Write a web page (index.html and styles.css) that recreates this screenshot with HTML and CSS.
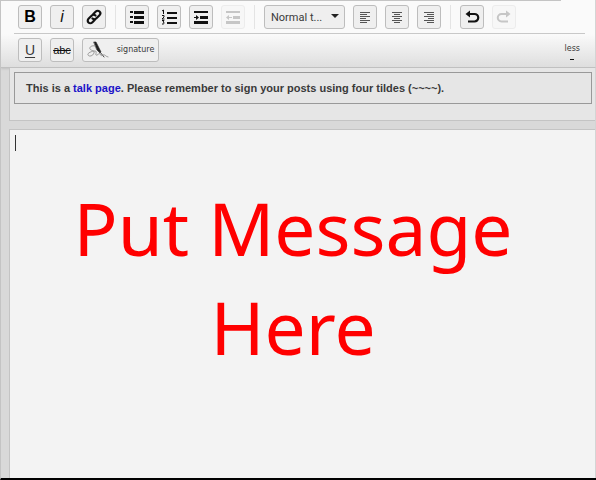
FILE: index.html
```
<!DOCTYPE html>
<html lang="en">
<head>
  <meta charset="UTF-8" />
  <meta name="viewport" content="width=device-width, initial-scale=1.0"/>
  <title>Message Editor</title>
  <link rel="stylesheet" href="styles.css">
</head>
<body>
<header class="toolbar">
  <div class="row">
    <div class="group">
      <button class="tool bold" type="button" aria-label="Bold">B</button>
      <button class="tool italic" type="button" aria-label="Italic">i</button>
      <button class="tool" type="button" aria-label="Link">
        <svg width="16" height="16" viewBox="0 0 16 16" fill="none" stroke="#111" stroke-width="2.200" stroke-linecap="round">
          <path d="M6.500 9.500a2.600 2.600 0 0 0 3.700 0l3.300-3.300a2.600 2.600 0 0 0-3.700-3.700L7.300 5"/>
          <path d="M9.500 6.500a2.600 2.600 0 0 0-3.700 0L2.500 9.800a2.600 2.600 0 0 0 3.700 3.700L8.700 11"/>
        </svg>
      </button>
    </div>
    <div class="group">
      <button class="tool" type="button" aria-label="Bulleted list">
        <svg width="16" height="16" viewBox="0 0 16 16" fill="#111">
          <path d="M1 2h3v2H1zM1 7h3v2H1zM1 12h3v2H1zM5 2h10v3H5zM5 7h10v3H5zM5 12h10v3H5z"/>
        </svg>
      </button>
      <button class="tool" type="button" aria-label="Numbered list">
        <svg width="16" height="16" viewBox="0 0 16 16" fill="#111">
          <path d="M6 3h10v2H6zM6 8h10v2H6zM6 13h10v2H6z"/>
          <path d="M1 2l1.500-1v4M1 6.500h2V8L1 10h2.500M1 11.500h2L2 13q1.500 0 1 1.500-.500.800-2 .500" fill="none" stroke="#111"/>
        </svg>
      </button>
      <button class="tool" type="button" aria-label="Indent">
        <svg width="16" height="16" viewBox="0 0 16 16" fill="#111">
          <path d="M1 2h14v2H1zM7 7h8v3H7zM1 12h14v3H1zM1 8h2V6l3 2.500L3 11V9H1z"/>
        </svg>
      </button>
      <button class="tool" type="button" aria-label="Outdent" disabled>
        <svg width="16" height="16" viewBox="0 0 16 16" fill="#111">
          <path d="M1 2h14v2H1zM8 7h7v3H8zM1 12h14v3H1zM7 8H4V6L1 8.500 4 11V9h3z"/>
        </svg>
      </button>
    </div>
    <div class="group">
      <div class="format">
        <select aria-label="Text style">
          <option>Normal t...</option>
          <option>Heading</option>
        </select>
      </div>
      <button class="tool" type="button" aria-label="Align left">
        <svg width="12" height="12" viewBox="0 0 12 12" stroke="#555">
          <path d="M1 1.500h10M1 3.500h7M1 5.500h10M1 7.500h6M1 9.500h10M1 11.500h7"/>
        </svg>
      </button>
      <button class="tool" type="button" aria-label="Align center">
        <svg width="12" height="12" viewBox="0 0 12 12" stroke="#555">
          <path d="M1 1.500h10M3 3.500h6M1 5.500h10M3 7.500h6M1 9.500h10M3 11.500h6"/>
        </svg>
      </button>
      <button class="tool" type="button" aria-label="Align right">
        <svg width="12" height="12" viewBox="0 0 12 12" stroke="#555">
          <path d="M1 1.500h10M4 3.500h7M1 5.500h10M5 7.500h6M1 9.500h10M4 11.500h7"/>
        </svg>
      </button>
    </div>
    <div class="group">
      <button class="tool" type="button" aria-label="Undo">
        <svg width="16" height="16" viewBox="0 0 16 16">
          <path d="M4 5h6.500a3.500 3.500 0 0 1 0 7.500H4" fill="none" stroke="#111" stroke-width="2.200"/>
          <path d="M6 1.500v7L1.500 5z" fill="#111"/>
        </svg>
      </button>
      <button class="tool" type="button" aria-label="Redo" disabled>
        <svg width="16" height="16" viewBox="0 0 16 16">
          <path d="M12 5H5.500a3.500 3.500 0 0 0 0 7.500H12" fill="none" stroke="#111" stroke-width="2"/>
          <path d="M10 1.500v7L14.500 5z" fill="#111"/>
        </svg>
      </button>
    </div>
  </div>

  <div class="row more">
    <div class="group">
      <button class="tool underline" type="button" aria-label="Underline">U</button>
      <button class="tool strike" type="button" aria-label="Strikethrough">abc</button>
      <button class="tool signature" type="button">
        <!-- pen over a scribble -->
        <svg width="22" height="18" viewBox="0 0 22 18" fill="none" stroke="#888" stroke-linecap="round">
          <path d="M7 1l2 0 5 10-1 1-3-3z" fill="#222" stroke="#222" stroke-width=".6"/>
          <path d="M13 11l4 5" stroke="#444"/>
          <path d="M8 5C5 4 2 6 3 8s5 1 4 4-5 4-6 2 4-4 7-4-1 5 2 4 2-3 3-1 1 2 3 1 3 2 5 2" stroke-width=".8"/>
        </svg>
        <span>signature</span>
      </button>
    </div>
    <button class="less" type="button">less<span class="dash"></span></button>
  </div>
</header>

<main class="page">
  <section class="notice">
    <p>This is a <a href="#">talk page</a>. Please remember to sign your posts using four tildes (~~~~).</p>
  </section>
  <div class="editor">
    <span class="caret"></span>
    <textarea aria-label="Message" spellcheck="false">Put Message
Here</textarea>
  </div>
</main>
</body>
</html>
```
FILE: styles.css
```
* {
  box-sizing: border-box;
}
body {
  margin: 0;
  min-height: 100vh;
  display: flex;
  flex-direction: column;
  background: #d9d9d9;
  border-left: 1px solid #c4c4c4;
  border-bottom: 2px solid #000;
  font-family: "Liberation Sans", Arial, sans-serif;
  color: #3a3a3a;
}
button, select, textarea {
  font-family: inherit;
  color: inherit;
  margin: 0;
}

/* toolbar */
.toolbar {
  background: linear-gradient(#fafafa, #fafafa 34px, #dedede);
  border-bottom: 1px solid #c0c0c0;
  border-right: 1px solid #d4d4d4;
  box-shadow: 0 1px 2px #c0c0c0;
}
.toolbar::before {
  content: "";
  display: block;
  height: 1px;
  margin-right: 34px;
  background: #c4c4c4;
}
.row {
  display: flex;
  margin: 0 10px 0 13px;
  padding: 4px;
  border-bottom: 1px solid #c8c8c8;
}
.more {
  justify-content: space-between;
  padding-bottom: 5px;
  border-bottom: none;
}
.group {
  display: flex;
  gap: 8px;
}
.group + .group {
  margin-left: 9px;
  padding-left: 9px;
  border-left: 1px solid #e4e4e4;
}
.tool {
  display: flex;
  align-items: center;
  justify-content: center;
  width: 24px;
  height: 24px;
  padding: 0;
  background: #efefef;
  border: 1px solid #bdbdbd;
  border-radius: 3px;
  line-height: 16px;
  cursor: pointer;
}
.tool:disabled {
  opacity: 0.22;
}
.bold {
  font-size: 16px;
  font-weight: bold;
  color: #000;
}
.italic {
  font-size: 16px;
  font-style: italic;
  color: #111;
}
.underline {
  font-size: 14px;
  text-decoration: underline;
  text-underline-offset: 2px;
}
.strike {
  font-size: 11px;
  color: #111;
  text-decoration: line-through;
}
.signature {
  width: 77px;
  gap: 8px;
  font-family: "DejaVu Sans", sans-serif;
  font-size: 8px;
}
.format {
  position: relative;
}
.format::after {
  content: "";
  position: absolute;
  top: 9px;
  right: 6px;
  border: 4px solid transparent;
  border-top-color: #222;
  pointer-events: none;
}
.format select {
  appearance: none;
  width: 81px;
  height: 24px;
  padding: 0 6px;
  background: #efefef;
  border: 1px solid #bdbdbd;
  border-radius: 3px;
  font-family: Roboto, sans-serif;
  font-size: 11px;
}
.less {
  display: flex;
  flex-direction: column;
  align-items: center;
  gap: 4px;
  padding: 5px 1px 0;
  background: none;
  border: none;
  font-family: "DejaVu Sans", sans-serif;
  font-size: 8px;
  line-height: 12px;
}
.dash {
  width: 4px;
  height: 1px;
  background: #111;
}

/* page */
.page {
  flex: 1;
  display: flex;
  flex-direction: column;
  gap: 8px;
  padding-left: 8px;
  border-right: 1px solid #d4d4d4;
}
.notice {
  padding: 4px 3px 16px 4px;
  background: #e6e6e6;
  border: 1px solid #c4c4c4;
  border-width: 0 0 1px 1px;
}
.notice p {
  margin: 0;
  padding: 7px 11px;
  border: 1px solid #999;
  font-size: 11px;
  font-weight: bold;
  line-height: 16px;
}
.notice a {
  color: #1a12c8;
  text-decoration: none;
}
.editor {
  position: relative;
  flex: 1;
  display: flex;
  background: #f3f3f3;
  border: 1px solid #c4c4c4;
  border-width: 1px 0 0 1px;
}
.caret {
  position: absolute;
  top: 5px;
  left: 5px;
  width: 1px;
  height: 16px;
  background: #333;
}
.editor textarea {
  flex: 1;
  width: 100%;
  padding: 48px 24px 0 5px;
  background: none;
  border: none;
  outline: none;
  resize: none;
  overflow: hidden;
  font-family: "Noto Sans", sans-serif;
  font-size: 73px;
  line-height: 99px;
  text-align: center;
  color: #f00;
}
```
